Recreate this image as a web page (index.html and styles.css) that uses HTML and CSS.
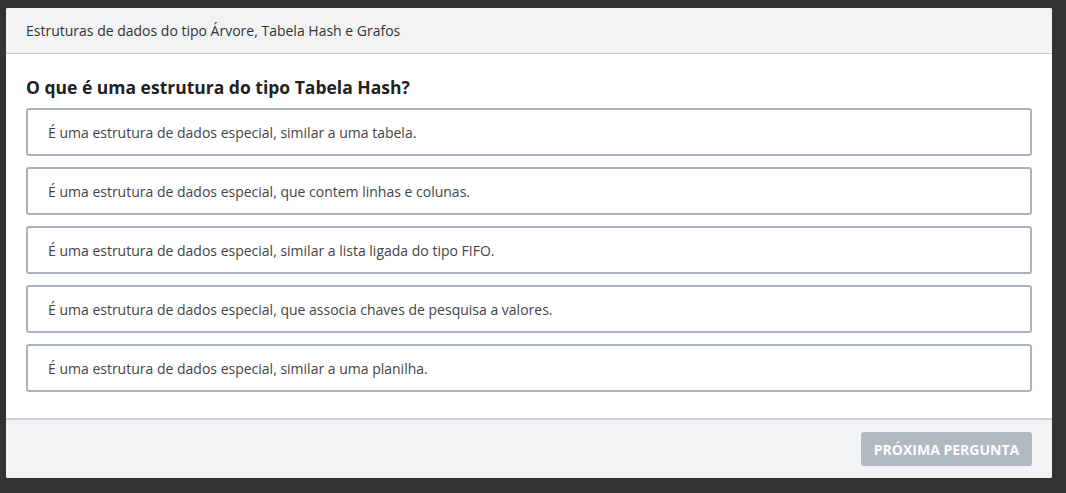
FILE: index.html
```html
<!DOCTYPE html>
<html lang="pt">
<head>
<meta charset="utf-8">
<link rel="stylesheet" href="styles.css">
</head>
<body>
<div class="modal">
  <div class="modal-header">Estruturas de dados do tipo Árvore, Tabela Hash e Grafos</div>
  <div class="modal-body">
    <h2 class="question">O que é uma estrutura do tipo Tabela Hash?</h2>
    <div class="options">
      <div class="option">É uma estrutura de dados especial, similar a uma tabela.</div>
      <div class="option">É uma estrutura de dados especial, que contem linhas e colunas.</div>
      <div class="option">É uma estrutura de dados especial, similar a lista ligada do tipo FIFO.</div>
      <div class="option">É uma estrutura de dados especial, que associa chaves de pesquisa a valores.</div>
      <div class="option">É uma estrutura de dados especial, similar a uma planilha.</div>
    </div>
  </div>
  <div class="modal-footer">
    <button class="next-btn" disabled>PRÓXIMA PERGUNTA</button>
  </div>
</div>
</body>
</html>
```
FILE: styles.css
```css
html, body {
  margin: 0;
  padding: 0;
  background: #333333;
  height: 100%;
}
body {
  padding: 8px 14px 0 6px;
  box-sizing: border-box;
  font-family: "Open Sans", "Liberation Sans", sans-serif;
}
.modal {
  width: 1046px;
  background: #ffffff;
  border-radius: 2px;
  overflow: hidden;
}
.modal-header {
  background: #f2f3f5;
  height: 46px;
  box-sizing: border-box;
  border-bottom: 1px solid #c9ccd1;
  padding: 0 20px;
  display: flex;
  align-items: center;
  font-size: 14px;
  color: #333333;
}
.modal-body {
  padding: 21px 20px 26px 20px;
}
.question {
  margin: 0 0 9px 0;
  font-size: 17.5px;
  line-height: 24px;
  font-weight: 700;
  color: #222222;
}
.options {
  display: flex;
  flex-direction: column;
  gap: 11px;
}
.option {
  height: 48px;
  box-sizing: border-box;
  border: 2px solid #aab2bb;
  border-radius: 3px;
  padding: 0 20px;
  display: flex;
  align-items: center;
  font-size: 14px;
  color: #444444;
}
.modal-footer {
  background: #f2f3f5;
  border-top: 2px solid #cdd0d4;
  height: 60px;
  box-sizing: border-box;
  display: flex;
  align-items: center;
  justify-content: flex-end;
  padding: 0 20px;
}
.next-btn {
  height: 34px;
  width: 171px;
  border: none;
  border-radius: 3px;
  background: #b1b9c1;
  color: #ffffff;
  font-family: "Open Sans", "Liberation Sans", sans-serif;
  font-weight: 700;
  font-size: 14px;
  padding: 0;
}
```
